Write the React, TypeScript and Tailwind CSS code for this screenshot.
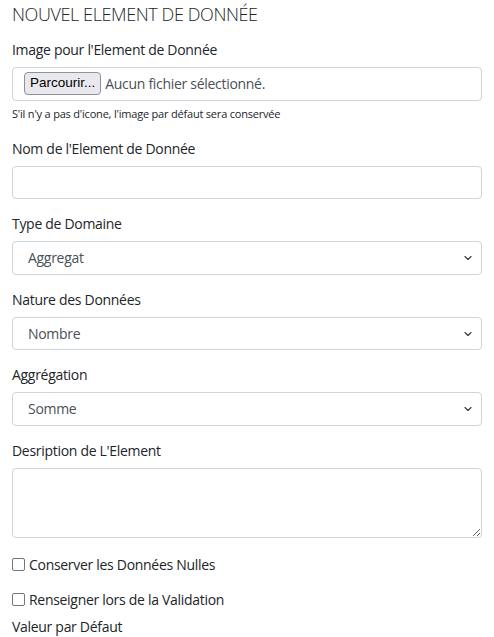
import { ChevronDown } from 'lucide-react';

const FONT = "font-['Open_Sans','Noto_Sans',sans-serif]";

const Label = ({ children }: { children: React.ReactNode }) => (
  <label className="mb-[7px] block h-[21px] text-[14px] leading-[21px] tracking-[-0.3px] text-[#212529]">
    {children}
  </label>
);

const Select = ({ value }: { value: string }) => (
  <div className="relative flex h-[33.5px] items-center rounded-[4px] border border-[#ced4da] bg-white pl-[15px] text-[14px] tracking-[-0.3px] text-[#495057]">
    <span>{value}</span>
    <ChevronDown className="absolute right-[7px] top-[10px] size-[12px] text-[#343a40]" strokeWidth={2.3} />
  </div>
);

const Check = ({ label }: { label: string }) => (
  <div className="flex h-[21px] items-center gap-[4px] text-[14px] tracking-[-0.3px] text-[#212529]">
    <span className="block size-[13px] rounded-[2px] border-[1.5px] border-[#767676] bg-white" />
    <span>{label}</span>
  </div>
);

export default function App() {
  return (
    <div className={`${FONT} bg-white px-[12px] text-[#212529]`}>
      <h5 className="h-[29px] text-[18px] leading-[29px] font-light tracking-[-0.4px]">NOUVEL ELEMENT DE DONNÉE</h5>

      <div className="mt-[9.5px]">
        <Label>Image pour l'Element de Donnée</Label>
        <div className="flex h-[34px] items-center rounded-[4px] border border-[#ced4da] pl-[11px] text-[14px] tracking-[-0.3px] text-[#495057]">
          <span className="flex h-[23px] items-center rounded-[4px] border border-[#8f8f9d] bg-[#e9e9ed] px-[5px] font-['Liberation_Sans',sans-serif] text-[13.5px] tracking-normal text-black">
            Parcourir...
          </span>
          <span className="ml-[4px]">Aucun fichier sélectionné.</span>
        </div>
        <p className="mt-[4px] h-[17px] text-[11px] leading-[17px] tracking-[-0.2px] text-[#212529]">
          S'il n'y a pas d'icone, l'image par défaut sera conservée
        </p>
      </div>

      <div className="mt-[16px]">
        <Label>Nom de l'Element de Donnée</Label>
        <div className="h-[33.5px] rounded-[4px] border border-[#ced4da] bg-white" />
      </div>

      <div className="mt-[14px]">
        <Label>Type de Domaine</Label>
        <Select value="Aggregat" />
      </div>

      <div className="mt-[14px]">
        <Label>Nature des Données</Label>
        <Select value="Nombre" />
      </div>

      <div className="mt-[14px]">
        <Label>Aggrégation</Label>
        <Select value="Somme" />
      </div>

      <div className="mt-[14px]">
        <Label>Desription de L'Element</Label>
        <textarea className="block h-[70.5px] w-full rounded-[4px] border border-[#ced4da] bg-white" />
      </div>

      <div className="mt-[16px]">
        <Check label="Conserver les Données Nulles" />
      </div>
      <div className="mt-[14px]">
        <Check label="Renseigner lors de la Validation" />
      </div>

      <div className="mt-[6px]">
        <Label>Valeur par Défaut</Label>
      </div>
    </div>
  );
}
